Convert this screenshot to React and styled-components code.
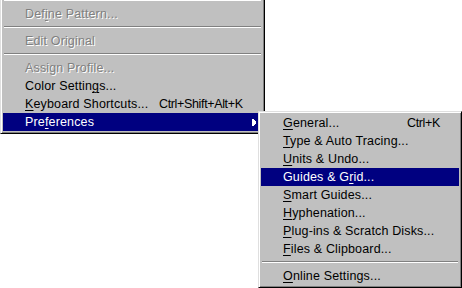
import React from 'react';
import styled, { createGlobalStyle } from 'styled-components';

const GlobalStyle = createGlobalStyle`
  html, body {
    margin: 0;
    padding: 0;
    background: #ffffff;
  }
`;

const Screen = styled.div`
  position: relative;
  width: 462px;
  height: 288px;
  overflow: hidden;
  background: #ffffff;
  font-family: "Liberation Sans", Arial, sans-serif;
  font-size: 12.5px;
`;

const MenuPanel = styled.div`
  box-sizing: border-box;
  width: ${({ $width }) => $width}px;
  padding: 2px;
  background: #c0c0c0;
  border-style: solid;
  border-width: 1px;
  border-color: #dfdfdf #000000 #000000 #dfdfdf;
  box-shadow: inset 1px 1px 0 #ffffff, inset -1px -1px 0 #808080;
`;

const MainPanel = styled(MenuPanel)`
  margin-top: -7px;
`;

const SubPanel = styled(MenuPanel)`
  position: absolute;
  left: 258px;
  top: 111px;
`;

const Row = styled.div`
  display: grid;
  grid-template-columns: ${({ $labelWidth }) => $labelWidth}px 1fr 10px;
  align-items: center;
  height: 18px;
  line-height: 18px;
  padding-left: 22px;
  white-space: nowrap;
  letter-spacing: 0.15px;
  background: ${({ $active }) => ($active ? '#000080' : 'transparent')};
  color: ${({ $active, $disabled }) => ($active ? '#ffffff' : $disabled ? '#808080' : '#000000')};
  text-shadow: ${({ $disabled }) => ($disabled ? '1px 1px 0 #ffffff' : 'none')};

  u {
    text-decoration: underline;
    text-underline-offset: 2px;
    text-decoration-thickness: 1px;
  }
`;

const Shortcut = styled.span`
  display: block;
  letter-spacing: -0.35px;
`;

const Arrow = styled.svg`
  display: block;
  width: 4px;
  height: 7px;
  shape-rendering: crispEdges;
`;

const Separator = styled.div`
  height: 9px;
  padding: 3px 1px 4px;
  box-sizing: border-box;

  &::before {
    content: '';
    display: block;
    height: 1px;
    border-bottom: 1px solid #ffffff;
    background: #808080;
  }
`;

const mainItems = [
  { sep: true },
  { label: <>Def<u>i</u>ne Pattern...</>, disabled: true },
  { sep: true },
  { label: <>Edit Original</>, disabled: true },
  { sep: true },
  { label: <>Assign Profile...</>, disabled: true },
  { label: <>Color Settin<u>g</u>s...</> },
  { label: <><u>K</u>eyboard Shortcuts...</>, shortcut: 'Ctrl+Shift+Alt+K' },
  { label: <>Pre<u>f</u>erences</>, active: true, submenu: true },
];

const subItems = [
  { label: <><u>G</u>eneral...</>, shortcut: 'Ctrl+K' },
  { label: <><u>T</u>ype &amp; Auto Tracing...</> },
  { label: <><u>U</u>nits &amp; Undo...</> },
  { label: <>Guides &amp; G<u>r</u>id...</>, active: true },
  { label: <><u>S</u>mart Guides...</> },
  { label: <><u>H</u>yphenation...</> },
  { label: <><u>P</u>lug-ins &amp; Scratch Disks...</> },
  { label: <><u>F</u>iles &amp; Clipboard...</> },
  { sep: true },
  { label: <><u>O</u>nline Settings...</> },
];

const MenuItems = ({ items, labelWidth }) =>
  items.map((item, i) =>
    item.sep ? (
      <Separator key={i} />
    ) : (
      <Row key={i} $labelWidth={labelWidth} $active={item.active} $disabled={item.disabled}>
        <span>{item.label}</span>
        <Shortcut>{item.shortcut}</Shortcut>
        {item.submenu ? (
          <Arrow viewBox="0 0 4 7">
            <polygon points="0,0 1,0 4,3 4,4 1,7 0,7" fill="currentColor" />
          </Arrow>
        ) : (
          <span />
        )}
      </Row>
    )
  );

const App = () => (
  <Screen>
    <GlobalStyle />
    <MainPanel $width={265}>
      <MenuItems items={mainItems} labelWidth={134} />
    </MainPanel>
    <SubPanel $width={204}>
      <MenuItems items={subItems} labelWidth={124} />
    </SubPanel>
  </Screen>
);

export default App;
